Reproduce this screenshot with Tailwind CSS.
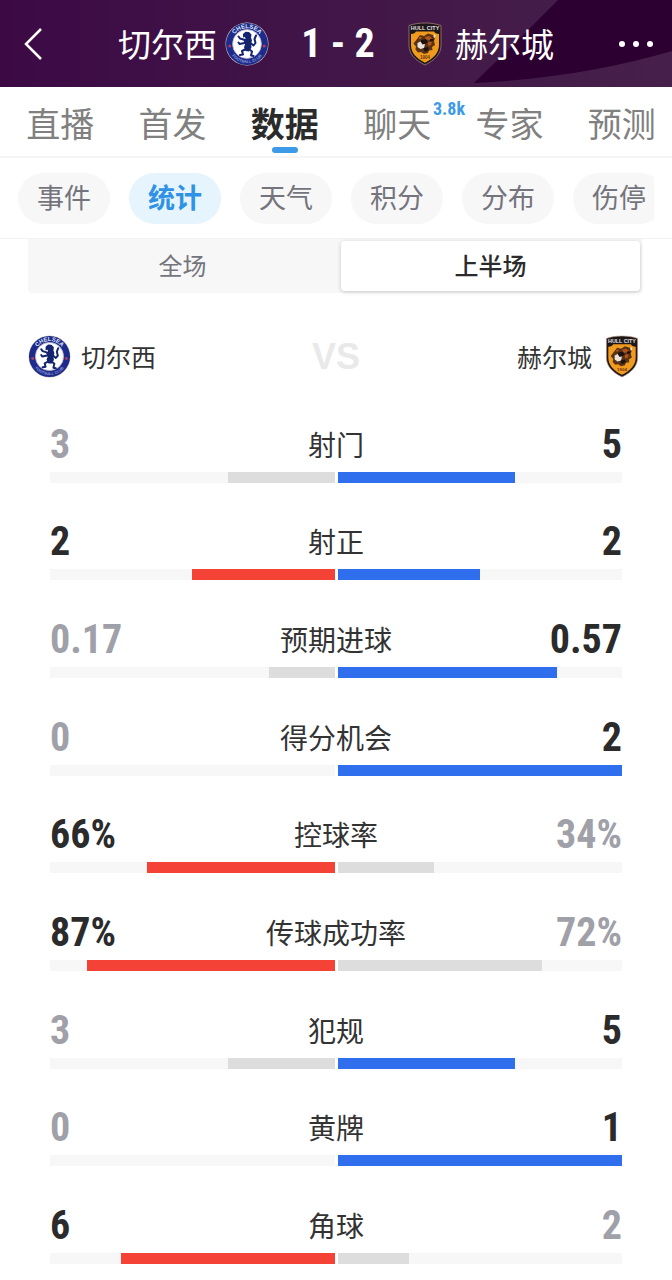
<!DOCTYPE html>
<html lang="zh-CN">
<head>
<meta charset="utf-8">
<meta name="viewport" content="width=device-width, initial-scale=1">
<title>切尔西 1-2 赫尔城</title>
<script src="https://cdn.jsdelivr.net/npm/@tailwindcss/browser@4"></script>
</head>
<body class="bg-white font-['Noto_Sans_CJK_SC',sans-serif] text-[#333]">

<svg class="hidden" aria-hidden="true">
  <defs>
    <symbol id="chelsea" viewBox="0 0 44 44">
      <circle cx="22" cy="22" r="21.5" fill="#d9c9b8"/>
      <circle cx="22" cy="22" r="21" fill="#1d2c8c"/>
      <circle cx="22" cy="22" r="14.4" fill="#fff" stroke="#b9b3c9" stroke-width=".8"/>
      <path id="arcTop" d="M6.200 22a15.800 15.800 0 0 1 31.600 0" fill="none"/>
      <path id="arcBottom" d="M3 22a19 19 0 0 0 38 0" fill="none"/>
      <text font-family="Liberation Sans" font-size="6" font-weight="700" fill="#dfe3f7" text-anchor="middle"><textPath href="#arcTop" startOffset="50%">CHELSEA</textPath></text>
      <text font-family="Liberation Sans" font-size="4" font-weight="700" fill="#8f9ad6" text-anchor="middle"><textPath href="#arcBottom" startOffset="50%">FOOTBALL CLUB</textPath></text>
      <circle cx="4.8" cy="24" r="1.5" fill="#b23a5a"/>
      <circle cx="39.2" cy="24" r="1.5" fill="#b23a5a"/>
      <path fill="none" stroke="#14246f" stroke-width="2" stroke-linecap="round" stroke-linejoin="round" d="M23 16L21 22l2 5M20 18l-5-1.500-1.500-2M19.500 21l-5 1-1-1.500M24 27l3 2.500-1 4 2.500.5M21 27l-4 2 1 3.500-3 .5M25.500 21l3 2.500 2-2.500-1-4 1.500-3.500"/>
      <path fill="#14246f" d="M18 12l2.500-2.300 3.500.3 2.500 2.500-.5 3 1 3-1 3 .5 4-2.500 4-3.500-.5-1.500-4 1.500-3.500-2-2.500 2-2-.5-2-2 .5z"/>
    </symbol>
    <symbol id="hull" viewBox="0 0 34 44">
      <path fill="#1c1719" stroke="#c9a08a" stroke-width=".6" d="M1 3.500C6 1.800 11 1 17 1s11 .8 16 2.500V23c0 9-6 15-16 20C7 38 1 32 1 23z"/>
      <path fill="#f09a1e" d="M3 12c3 0 4-1 5-2.500h18c1 1.500 2 2.500 5 2.500v11c0 8-5.500 13.300-14 17.700C8.500 36.300 3 31 3 23z"/>
      <text x="17" y="8" font-family="Liberation Sans" font-size="5.500" font-weight="700" fill="#e6e0e4" text-anchor="middle">HULL CITY</text>
      <path fill="#5a3216" d="M9 17l3-4 4 1 4-2.500 5 1.500 2 3-1 3 1 4-3 2 .5 3-3.500.5-1 2.500-4 1-3-2-3 .5-2.500-3 .5-3-2.500-3z"/>
      <path fill="#b0561a" d="M17 15l4-1 3 2-2 2-4 .5zM20 20l4 0-1 3-3 1zM11 15l3 0-1 2-2 0z"/>
      <path fill="#1c1310" d="M13 18l5-1 2 3-3 2-4 0zM15 26l5-1 1 3-4 2zM22 17l4 0-1 2-3 0z"/>
      <path fill="#e9e4dc" d="M9.500 21l3-1.500 2 3 2.500-.5-1 4-3.500 1-3-2z"/>
      <path fill="#fbe3c0" d="M26 12l1.500 1-.5 3-1.500-1z"/>
      <text x="17" y="37" font-family="Liberation Sans" font-size="4.500" font-weight="700" fill="#6b3210" text-anchor="middle">1904</text>
    </symbol>
  </defs>
</svg>

<div class="flex min-h-screen flex-col overflow-hidden">
  <header class="relative h-[87px] shrink-0 overflow-hidden bg-linear-to-r from-[#3c0945] to-[#46204a] text-white">
    <svg class="absolute inset-0 h-full w-full" viewBox="0 0 672 87" preserveAspectRatio="none" aria-hidden="true">
      <path fill="#2c0030" d="M558 0L522 36 474 83Q580 78 672 51V0z"/>
    </svg>
    <div class="relative flex h-full items-center pl-6 pr-4">
      <button type="button" aria-label="返回" class="flex w-[94px] items-center">
        <svg class="h-9 w-5" viewBox="0 0 20 36" fill="none" stroke="currentColor" stroke-width="2.500"><path d="M17 3L2 18l15 15"/></svg>
      </button>
      <h1 class="flex flex-1 items-center text-[33px] leading-10">
        <span class="pb-0.5">切尔西</span>
        <svg class="ml-2 size-11" role="img" aria-label="切尔西队徽"><use href="#chelsea"/></svg>
        <span class="flex-1 text-center font-['Noto_Sans_ExtraCondensed','Roboto_Condensed',sans-serif] text-[40px] font-bold">1 - 2</span>
        <svg class="mr-3 h-11 w-9" role="img" aria-label="赫尔城队徽"><use href="#hull"/></svg>
        <span class="pb-0.5">赫尔城</span>
      </h1>
      <button type="button" aria-label="更多" class="ml-[62px] flex w-10 items-center">
        <svg class="h-2 w-10" viewBox="0 0 40 8" fill="currentColor"><circle cx="6" cy="4" r="3"/><circle cx="20" cy="4" r="3"/><circle cx="34" cy="4" r="3"/></svg>
      </button>
    </div>
  </header>

  <nav aria-label="比赛" class="-mr-1.5 grid h-[71px] shrink-0 grid-cols-6 border-b-2 border-[#f5f5f5] pl-1 text-[34px] leading-[72px] text-[#808080]">
    <button type="button">直播</button>
    <button type="button">首发</button>
    <button type="button" aria-current="page" class="relative font-bold text-[#2b2b2b]">数据<span class="absolute bottom-1.5 left-1/2 h-1.5 w-[26px] -translate-x-1/2 rounded-full bg-[#3d9ae6]"></span></button>
    <button type="button" class="relative">聊天<span class="absolute top-3 left-[92px] font-['Noto_Sans_ExtraCondensed','Roboto_Condensed',sans-serif] text-lg leading-5 font-bold text-[#3d9ae6]">3.8k</span></button>
    <button type="button">专家</button>
    <button type="button">预测</button>
  </nav>

  <nav aria-label="数据分类" class="mr-[18px] flex h-20 shrink-0 items-center gap-[19px] overflow-hidden pl-[18px] text-[27px] leading-[47px] text-[#74747c]">
    <button type="button" class="w-[92px] shrink-0 rounded-full bg-[#f7f7f8] pb-1">事件</button>
    <button type="button" aria-current="page" class="w-[92px] shrink-0 rounded-full bg-[#e6f4fe] pb-1 font-bold text-[#2f92e4]">统计</button>
    <button type="button" class="w-[92px] shrink-0 rounded-full bg-[#f7f7f8] pb-1">天气</button>
    <button type="button" class="w-[92px] shrink-0 rounded-full bg-[#f7f7f8] pb-1">积分</button>
    <button type="button" class="w-[92px] shrink-0 rounded-full bg-[#f7f7f8] pb-1">分布</button>
    <button type="button" class="w-[92px] shrink-0 rounded-full bg-[#f7f7f8] pb-1">伤停</button>
  </nav>

  <main class="flex flex-1 flex-col border-t border-[#f2f2f2]">
    <div class="mr-[30px] ml-7 grid h-[54px] shrink-0 grid-cols-[311fr_299fr] rounded-b bg-[#f7f7f7] p-0.5 text-2xl">
      <button type="button" class="pr-1.5 pb-0.5 text-[#74747c]">全场</button>
      <button type="button" aria-pressed="true" class="rounded bg-white pb-0.5 font-medium text-[#2b2b2b] shadow-[0_1px_4px_rgba(0,0,0,0.2)]">上半场</button>
    </div>

    <div class="mt-[42px] grid h-[42px] shrink-0 grid-cols-[1fr_auto_1fr] items-center px-7 text-[25px]">
      <div class="flex items-center gap-2.5"><svg class="size-[43px]" role="img" aria-label="切尔西队徽"><use href="#chelsea"/></svg>切尔西</div>
      <div class="font-['Liberation_Sans',sans-serif] text-4xl leading-none font-bold text-[#e9e9ea]">VS</div>
      <div class="flex items-center justify-end gap-3 pr-1">赫尔城<svg class="h-[43px] w-9" role="img" aria-label="赫尔城队徽"><use href="#hull"/></svg></div>
    </div>

    <ul id="stats" class="mt-6 flex flex-1 flex-col px-[50px]"></ul>
  </main>
</div>

<template id="row">
  <li class="flex flex-1 flex-col justify-end pb-4">
    <div class="grid h-[54px] grid-cols-[1fr_auto_1fr] items-center text-[28px] leading-10">
      <span data-home class="font-['Noto_Sans_ExtraCondensed','Roboto_Condensed',sans-serif] text-[40px] font-bold"></span>
      <span data-label class="pb-0.5"></span>
      <span data-away class="text-right font-['Noto_Sans_ExtraCondensed','Roboto_Condensed',sans-serif] text-[40px] font-bold"></span>
    </div>
    <div class="grid h-[11px] grid-cols-2 gap-[3px]">
      <div class="flex justify-end bg-[#f7f7f7]"><div data-homebar></div></div>
      <div class="flex bg-[#f7f7f7]"><div data-awaybar></div></div>
    </div>
  </li>
</template>

<script>
  // label, home value, away value, home bar %, away bar %
  const stats = [
    ["射门", "3", "5", 37.5, 62.5],
    ["射正", "2", "2", 50, 50],
    ["预期进球", "0.17", "0.57", 23, 77],
    ["得分机会", "0", "2", 0, 100],
    ["控球率", "66%", "34%", 66, 34],
    ["传球成功率", "87%", "72%", 87, 72],
    ["犯规", "3", "5", 37.5, 62.5],
    ["黄牌", "0", "1", 0, 100],
    ["角球", "6", "2", 75, 25],
  ];
  const list = document.getElementById("stats");
  const row = document.getElementById("row");
  for (const [label, home, away, hw, aw] of stats) {
    const node = row.content.cloneNode(true);
    const q = (name) => node.querySelector(`[data-${name}]`);
    q("label").textContent = label;
    q("home").textContent = home;
    q("away").textContent = away;
    q("home").classList.add(hw >= aw ? "text-[#2b2b2b]" : "text-[#a0a0a8]");
    q("away").classList.add(aw >= hw ? "text-[#2b2b2b]" : "text-[#a0a0a8]");
    q("homebar").classList.add(hw >= aw ? "bg-[#f44336]" : "bg-[#dddddd]");
    q("awaybar").classList.add(aw >= hw ? "bg-[#2f6fed]" : "bg-[#dddddd]");
    q("homebar").style.width = hw + "%";
    q("awaybar").style.width = aw + "%";
    list.append(node);
  }
</script>
</body>
</html>
